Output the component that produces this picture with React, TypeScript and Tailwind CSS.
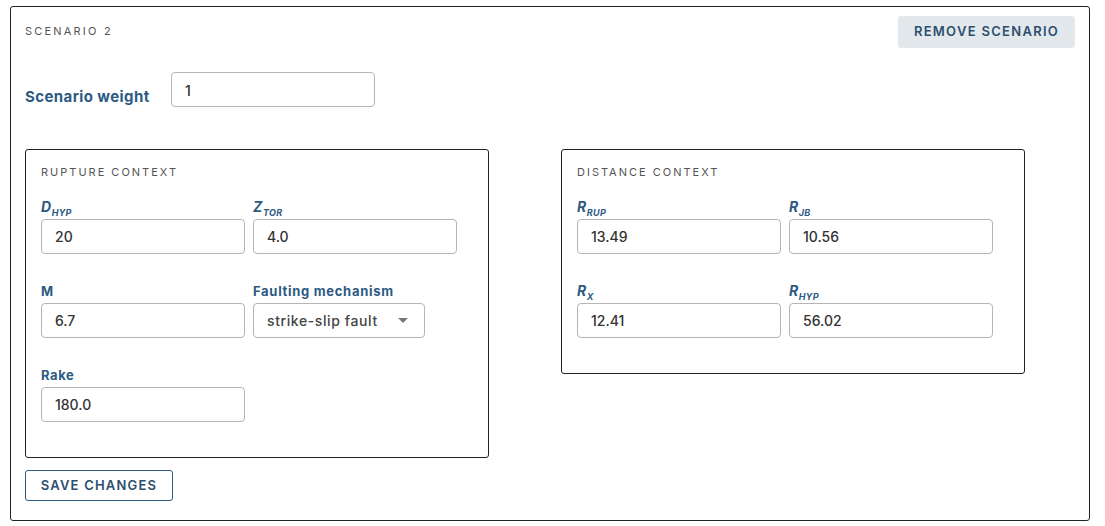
import React from 'react';

const font = { fontFamily: 'Inter, "Noto Sans", sans-serif' };

function Sym({ main, sub }: { main: string; sub: string }) {
  return (
    <span className="italic font-bold">
      <span className="text-[14px]">{main}</span>
      <sub className="text-[9px] uppercase align-[-2px] tracking-[0.3px]">{sub}</sub>
    </span>
  );
}

function Field({ label, value }: { label: React.ReactNode; value: string }) {
  return (
    <div className="flex flex-col">
      <div className="h-[16px] mb-[4px] text-[13px] leading-[16px] font-bold tracking-[0.6px] text-[#2d5a82]">{label}</div>
      <div className="h-[35px] w-[204px] border border-[#b5b5b5] rounded-[4px] pl-[13px] flex items-center text-[14px] font-medium text-[#333]">
        {value}
      </div>
    </div>
  );
}

function SelectField() {
  return (
    <div className="flex flex-col">
      <div className="h-[16px] mb-[4px] text-[13px] leading-[16px] font-bold tracking-[0.7px] text-[#2d5a82]">Faulting mechanism</div>
      <div className="h-[35px] w-[172px] border border-[#b5b5b5] rounded-[4px] pl-[13px] pr-[16px] flex items-center justify-between text-[14px] font-medium tracking-[0.6px] text-[#444]">
        <span>strike-slip fault</span>
        <svg width="10" height="5" viewBox="0 0 10 5">
          <path d="M0 0 L10 0 L5 5 Z" fill="#777" />
        </svg>
      </div>
    </div>
  );
}

function Panel({ title, children }: { title: string; children: React.ReactNode }) {
  return (
    <div className="w-[464px] border border-[#222] rounded-[3px] pl-[15px] pt-[14px] pb-[35px]">
      <div className="text-[11px] leading-[16px] tracking-[2px] text-[#555] mb-[19px]">{title}</div>
      <div className="grid grid-cols-[204px_204px] gap-x-[8px] gap-y-[29px]">{children}</div>
    </div>
  );
}

export default function App() {
  return (
    <div className="bg-white w-[1105px] h-[526px] pl-[10px] pt-[6px]" style={font}>
      <div className="w-[1080px] h-[515px] border border-[#222] rounded-[3px] pl-[14px] pr-[14px] pt-[9px]">
        <div className="flex justify-between items-start">
          <div className="text-[11px] tracking-[2.2px] text-[#555] mt-[7px] leading-[16px]">SCENARIO 2</div>
          <button className="h-[32px] w-[177px] rounded-[3px] bg-[#e3e8ed] text-[#2d4f6e] text-[13px] font-semibold tracking-[1.3px]">
            REMOVE SCENARIO
          </button>
        </div>

        <div className="flex items-end mt-[24px]">
          <div className="w-[146px] text-[15px] leading-[20px] font-bold tracking-[0.4px] text-[#2d5a82]">Scenario weight</div>
          <div className="h-[35px] w-[204px] border border-[#b5b5b5] rounded-[4px] pl-[13px] pt-[7px] text-[14px] font-medium text-[#333]">
            1
          </div>
        </div>

        <div className="flex items-start gap-[72px] mt-[42px]">
          <Panel title="RUPTURE CONTEXT">
            <Field label={<Sym main="D" sub="hyp" />} value="20" />
            <Field label={<Sym main="Z" sub="tor" />} value="4.0" />
            <Field label="M" value="6.7" />
            <SelectField />
            <Field label="Rake" value="180.0" />
          </Panel>
          <Panel title="DISTANCE CONTEXT">
            <Field label={<Sym main="R" sub="rup" />} value="13.49" />
            <Field label={<Sym main="R" sub="jb" />} value="10.56" />
            <Field label={<Sym main="R" sub="x" />} value="12.41" />
            <Field label={<Sym main="R" sub="hyp" />} value="56.02" />
          </Panel>
        </div>

        <button className="mt-[12px] h-[31px] w-[148px] border border-[#2d5a82] rounded-[3px] text-[#2d4f6e] text-[13px] font-semibold tracking-[1.2px]">
          SAVE CHANGES
        </button>
      </div>
    </div>
  );
}
